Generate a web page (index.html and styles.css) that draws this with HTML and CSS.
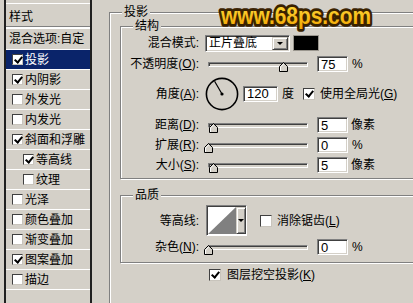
FILE: index.html
```html
<!DOCTYPE html>
<html lang="zh-CN">
<head>
<meta charset="utf-8">
<title>图层样式</title>
<link rel="stylesheet" href="styles.css">
</head>
<body>
<div class="dialog">
  <div class="styles-panel">
    <div class="panel-head">样式</div>
    <div class="panel-list">
      <div class="item first">混合选项:自定</div>
      <div class="item selected"><span class="cb on"></span>投影</div>
      <div class="item"><span class="cb on"></span>内阴影</div>
      <div class="item"><span class="cb"></span>外发光</div>
      <div class="item"><span class="cb"></span>内发光</div>
      <div class="item"><span class="cb on"></span>斜面和浮雕</div>
      <div class="item sub"><span class="cb on"></span>等高线</div>
      <div class="item sub"><span class="cb"></span>纹理</div>
      <div class="item"><span class="cb"></span>光泽</div>
      <div class="item"><span class="cb"></span>颜色叠加</div>
      <div class="item"><span class="cb"></span>渐变叠加</div>
      <div class="item"><span class="cb on"></span>图案叠加</div>
      <div class="item"><span class="cb"></span>描边</div>
    </div>
  </div>

  <div class="main">
    <div class="group g-shadow">
      <div class="title">投影</div>

      <div class="group g-inner g-struct">
        <div class="title">结构</div>
        <div class="row r-blend">
          <span class="label">混合模式:</span>
          <div class="select"><span class="select-text">正片叠底</span><span class="drop-btn"><span class="arrow"></span></span></div>
          <span class="swatch"></span>
        </div>
        <div class="row r-opacity">
          <span class="label">不透明度(<u>O</u>):</span>
          <div class="slider"><div class="track"></div><svg class="thumb" style="left:75px" width="9" height="10" viewBox="0 0 9 10"><path d="M4.5 0.5 L8.5 4.5 V9.5 H0.5 V4.5 Z" fill="#d4d0c8" stroke="#000"/><path d="M1.5 9 V5 L4.5 2" stroke="#fff" fill="none"/></svg></div>
          <span class="field">75</span>
          <span class="unit">%</span>
        </div>
        <div class="row r-angle">
          <span class="label">角度(<u>A</u>):</span>
          <svg class="dial" width="34" height="34" viewBox="0 0 34 34"><circle cx="17" cy="17" r="15.6" fill="none" stroke="#000" stroke-width="1.6"/><line x1="17" y1="17" x2="9.6" y2="4.2" stroke="#000" stroke-width="1.2"/><circle cx="17" cy="17" r="1.6" fill="#000"/></svg>
          <span class="field f-angle">120</span>
          <span class="unit u-deg">度</span>
          <span class="cb on cb-global"></span>
          <span class="cb-label">使用全局光(<u>G</u>)</span>
        </div>
        <div class="row r-dist">
          <span class="label">距离(<u>D</u>):</span>
          <div class="slider"><div class="track"></div><svg class="thumb" style="left:5px" width="9" height="10" viewBox="0 0 9 10"><path d="M4.5 0.5 L8.5 4.5 V9.5 H0.5 V4.5 Z" fill="#d4d0c8" stroke="#000"/><path d="M1.5 9 V5 L4.5 2" stroke="#fff" fill="none"/></svg></div>
          <span class="field">5</span>
          <span class="unit u-px">像素</span>
        </div>
        <div class="row">
          <span class="label">扩展(<u>R</u>):</span>
          <div class="slider"><div class="track"></div><svg class="thumb" style="left:0px" width="9" height="10" viewBox="0 0 9 10"><path d="M4.5 0.5 L8.5 4.5 V9.5 H0.5 V4.5 Z" fill="#d4d0c8" stroke="#000"/><path d="M1.5 9 V5 L4.5 2" stroke="#fff" fill="none"/></svg></div>
          <span class="field">0</span>
          <span class="unit">%</span>
        </div>
        <div class="row">
          <span class="label">大小(<u>S</u>):</span>
          <div class="slider"><div class="track"></div><svg class="thumb" style="left:5px" width="9" height="10" viewBox="0 0 9 10"><path d="M4.5 0.5 L8.5 4.5 V9.5 H0.5 V4.5 Z" fill="#d4d0c8" stroke="#000"/><path d="M1.5 9 V5 L4.5 2" stroke="#fff" fill="none"/></svg></div>
          <span class="field">5</span>
          <span class="unit u-px">像素</span>
        </div>
      </div>

      <div class="group g-inner g-quality">
        <div class="title">品质</div>
        <div class="row r-contour">
          <span class="label">等高线:</span>
          <div class="contour">
            <svg class="contour-preview" width="28" height="27" viewBox="0 0 28 27"><rect width="28" height="27" fill="#fff"/><polygon points="0,27 28,0 28,27" fill="#808080"/></svg>
            <span class="contour-btn"><span class="arrow"></span></span>
          </div>
          <span class="cb cb-aa"></span>
          <span class="cb-label">消除锯齿(<u>L</u>)</span>
        </div>
        <div class="row r-noise">
          <span class="label">杂色(<u>N</u>):</span>
          <div class="slider"><div class="track"></div><svg class="thumb" style="left:0px" width="9" height="10" viewBox="0 0 9 10"><path d="M4.5 0.5 L8.5 4.5 V9.5 H0.5 V4.5 Z" fill="#d4d0c8" stroke="#000"/><path d="M1.5 9 V5 L4.5 2" stroke="#fff" fill="none"/></svg></div>
          <span class="field">0</span>
          <span class="unit">%</span>
        </div>
      </div>

      <div class="row r-knockout">
        <span class="cb on"></span>
        <span class="cb-label">图层挖空投影(<u>K</u>)</span>
      </div>
    </div>
  </div>

  <svg class="watermark" width="164" height="32" viewBox="0 0 164 32">
    <defs>
      <linearGradient id="wg" x1="0" y1="0" x2="0" y2="1">
        <stop offset="0" stop-color="#ffe040"/>
        <stop offset="1" stop-color="#f2a400"/>
      </linearGradient>
    </defs>
    <text class="wm-text" x="5" y="24" textLength="150" lengthAdjust="spacingAndGlyphs">www.68ps.com</text>
  </svg>
</div>
</body>
</html>
```

FILE: styles.css
```css
* { box-sizing: border-box; }

html, body {
  margin: 0;
  padding: 0;
}

body {
  width: 413px;
  height: 303px;
  overflow: hidden;
  background: #d4d0c8;
  color: #000;
  font-family: "Liberation Sans", "Noto Sans CJK SC", sans-serif;
  font-size: 12px;
  line-height: 1;
}

u { text-decoration: underline; text-underline-offset: 1px; }

.dialog {
  position: relative;
  display: flex;
  height: 303px;
  overflow: hidden;
  padding-left: 4px;
}

/* ---------- left styles list ---------- */
.styles-panel {
  flex: none;
  width: 88px;
  height: 303px;
  border-left: 2px solid #202020;
  border-right: 2px solid #202020;
  padding-top: 3px;
}

.panel-head {
  height: 24px;
  border-top: 1px solid #fff;
  border-bottom: 1px solid #808080;
  padding: 4px 0 0 3px;
  line-height: 18px;
}

.panel-list {
  border-top: 2px solid #fff;
}

.item {
  display: flex;
  align-items: center;
  gap: 2px;
  height: 20px;
  padding-left: 6px;
  border-bottom: 1px solid #fff;
  white-space: nowrap;
}

.item.first {
  height: 21px;
  padding-left: 3px;
}

.item.sub { padding-left: 17px; }

.item.selected {
  background: #0a246a;
  color: #fff;
}

/* ---------- checkbox ---------- */
.cb {
  position: relative;
  flex: none;
  width: 11px;
  height: 11px;
  background: #fff;
  border: 1px solid;
  border-color: #404040 #c8c4bc #c8c4bc #404040;
}

.cb.on::after {
  content: "";
  position: absolute;
  left: 3px;
  top: 0px;
  width: 3px;
  height: 6px;
  border-right: 2px solid #000;
  border-bottom: 2px solid #000;
  transform: rotate(40deg);
}

/* ---------- group boxes ---------- */
.main {
  flex: none;
  width: 322px;
  height: 303px;
  padding-left: 17px;
}

.group {
  border: 1px solid #808080;
  box-shadow: inset 1px 1px 0 #fff, 1px 1px 0 #fff;
}

.title {
  width: max-content;
  height: 16px;
  margin: -9px 0 0 12px;
  padding: 0 2px;
  line-height: 16px;
  background: #d4d0c8;
}

.g-shadow {
  margin-top: 12px;
  width: 305px;
  height: 292px;
}

.g-inner {
  margin-left: 10px;
  width: 294px;
}

.g-struct {
  margin-top: 6px;
  padding-bottom: 3px;
}

.g-quality {
  margin-top: 16px;
  padding-bottom: 5px;
}

/* ---------- rows ---------- */
.row {
  display: flex;
  align-items: center;
  height: 20px;
  white-space: nowrap;
}

.label {
  flex: none;
  width: 78px;
  text-align: right;
}

.r-blend { height: 18px; }
.r-opacity { height: 24px; }
.r-angle { height: 35px; }
.r-dist { margin-top: 4px; }

.r-contour { height: 31px; margin-top: 2px; }
.r-noise { margin-top: 1px; }

.r-knockout {
  margin-top: 2px;
  padding-left: 99px;
  gap: 6px;
}

/* ---------- controls ---------- */
.select {
  display: flex;
  align-items: center;
  margin-left: 6px;
  width: 85px;
  height: 17px;
  padding: 2px;
  background: #fff;
  border: 1px solid;
  border-color: #808080 #fff #fff #808080;
  box-shadow: inset 1px 1px 0 #404040, inset -1px -1px 0 #d4d0c8;
}

.select-text {
  flex: 1;
  padding-left: 1px;
}

.drop-btn,
.contour-btn {
  display: flex;
  align-items: center;
  justify-content: center;
  flex: none;
  background: #d4d0c8;
  border: 1px solid;
  border-color: #d4d0c8 #404040 #404040 #d4d0c8;
  box-shadow: inset 1px 1px 0 #fff, inset -1px -1px 0 #808080;
}

.drop-btn {
  width: 16px;
  height: 13px;
  margin-right: -1px;
}

.arrow {
  width: 0;
  height: 0;
  border-left: 3px solid transparent;
  border-right: 3px solid transparent;
  border-top: 3px solid #000;
}

.swatch {
  flex: none;
  margin-left: 3px;
  width: 26px;
  height: 16px;
  background: #000;
  border: 1px solid #9a968e;
}

.slider {
  position: relative;
  flex: none;
  margin-left: 5px;
  width: 108px;
  height: 16px;
}

.track {
  margin: 6px 4px 0 4px;
  height: 5px;
  background: #d4d0c8;
  border: 1px solid;
  border-color: #808080 #fff #fff #808080;
  box-shadow: inset 1px 1px 0 #404040;
}

.thumb {
  position: absolute;
  top: 6px;
  display: block;
}

.field {
  flex: none;
  display: flex;
  align-items: center;
  margin-left: 5px;
  width: 31px;
  height: 16px;
  padding-left: 3px;
  background: #fff;
  border: 1px solid;
  border-color: #808080 #fff #fff #808080;
  box-shadow: inset 1px 1px 0 #404040, inset -1px -1px 0 #d4d0c8;
  font-size: 13px;
}

.unit { margin-left: 4px; }
.u-px { margin-left: 3px; }

.dial {
  flex: none;
  align-self: flex-start;
  margin: 1px 0 0 6px;
}

.f-angle {
  margin-left: 4px;
  width: 35px;
}

.u-deg { margin-left: 4px; }

.cb-global {
  margin-left: 9px;
  width: 12px;
  height: 12px;
}

.cb-label { margin-left: 5px; }
.r-knockout .cb-label { margin-left: 0; }
.r-knockout .cb { width: 12px; height: 12px; }

.contour {
  display: flex;
  flex: none;
  margin-left: 7px;
  width: 41px;
  height: 31px;
  padding: 1px;
  border: 1px solid;
  border-color: #808080 #fff #fff #808080;
  box-shadow: inset 1px 1px 0 #404040;
  background: #fff;
}

.contour-preview { display: block; flex: none; }

.contour-btn {
  width: 10px;
  height: 27px;
}

.cb-aa {
  margin-left: 13px;
  width: 12px;
  height: 12px;
}

/* ---------- watermark ---------- */
.watermark {
  position: absolute;
  left: 216px;
  top: 0;
  overflow: visible;
}

.wm-text {
  font-family: "Liberation Sans", sans-serif;
  font-weight: bold;
  font-size: 24px;
  fill: url(#wg);
  stroke: #3a2200;
  stroke-width: 5.5px;
  stroke-linejoin: round;
  paint-order: stroke;
}
```
